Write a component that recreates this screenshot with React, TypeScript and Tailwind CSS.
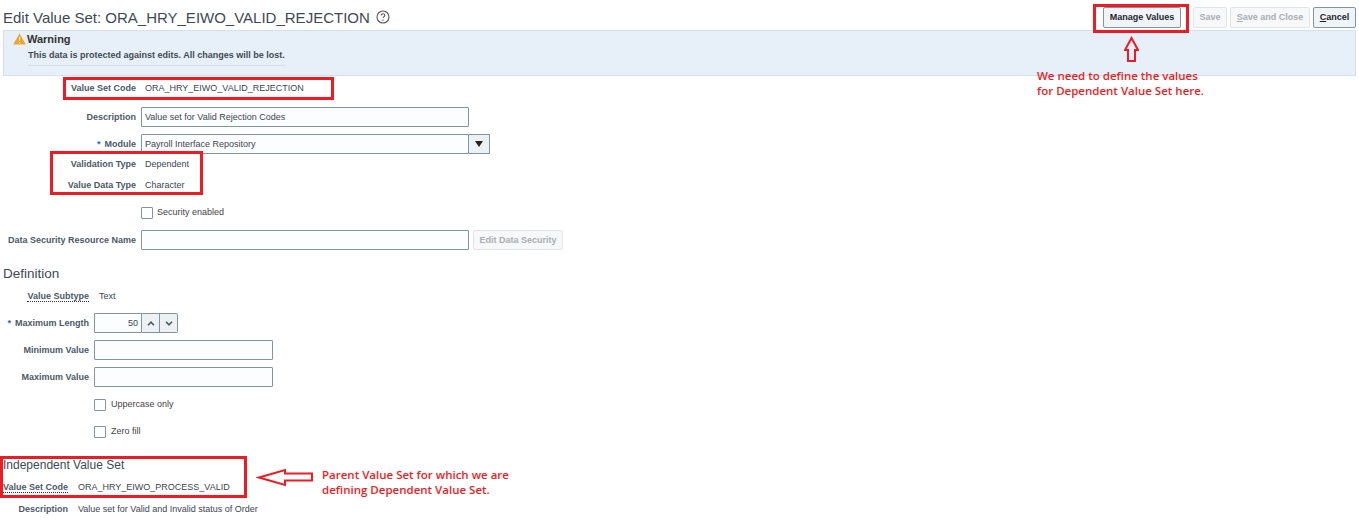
import React from 'react';

const labelCls = 'text-right text-[9px] font-bold text-[#4a5a68] whitespace-nowrap pt-[2px]';
const valueCls = 'text-[9px] text-[#3a4650] whitespace-nowrap pt-[2px]';
const inputCls = 'h-5 border border-[#7f95a5] rounded-[1px] bg-[#fcfdfe] text-[9px] text-[#3a4650] px-[3px] pt-[2px] flex items-center whitespace-nowrap';

const Row = ({ mt, width, label, children, dotted }: { mt: string; width: string; label?: React.ReactNode; children?: React.ReactNode; dotted?: boolean }) => (
    <div className={`flex items-center h-5 ${mt}`}>
        <div className={`${width} shrink-0 ${labelCls}`}>
            {dotted ? <span className="border-b border-dotted border-[#333]">{label}</span> : label}
        </div>
        {children}
    </div>
);

const Checkbox = ({ text, gap }: { text: string; gap: string }) => (
    <div className={`flex items-center ${gap}`}>
        <div className="w-3 h-3 border border-[#7f95a5] rounded-[1px] bg-white mt-[2px]" />
        <span className="text-[9px] text-[#444] mt-[1px]">{text}</span>
    </div>
);

const Btn = ({ children, cls }: { children: React.ReactNode; cls: string }) => (
    <div className={`h-[21px] pt-[2px] flex items-center justify-center rounded-[2px] text-[9px] font-bold border ${cls}`}>{children}</div>
);

const Star = () => <span className="text-[#1f6fb0] mr-[4px]">*</span>;

const on = 'border-[#7f95a5] bg-[#f1f4f6] text-[#1c2630]';
const off = 'border-[#e0e5e8] bg-[#f7f8f9] text-[#a9aeb2]';

export default function App() {
    return (
        <div className="relative w-[1359px] h-[523px] overflow-hidden bg-white font-['Liberation_Sans',Arial,sans-serif]">
            {/* header */}
            <div className="flex items-center justify-between h-[30px] pt-[4px] pl-[3px] pr-[3px]">
                <div className="flex items-center gap-[6px]">
                    <h1 className="text-[15px] text-[#3d4a55] leading-none">Edit Value Set: ORA_HRY_EIWO_VALID_REJECTION</h1>
                    <svg width="14" height="14" viewBox="0 0 14 14" fill="none" stroke="#555" strokeWidth="1.1">
                        <circle cx="7" cy="7" r="6" />
                        <path d="M5.2 5.5c0-1 .8-1.7 1.8-1.7s1.8.7 1.8 1.6c0 1.2-1.8 1.3-1.8 2.7" />
                        <path d="M7 9.6v1.2" />
                    </svg>
                </div>
                <div className="flex items-center">
                    <Btn cls={`${on} w-[78px]`}>Manage Values</Btn>
                    <Btn cls={`${off} w-[34px] ml-[12px]`}>Save</Btn>
                    <Btn cls={`${off} w-[80px] ml-[3px]`}><span><u>S</u>ave and Close</span></Btn>
                    <Btn cls={`${on} w-[43px] ml-[3px]`}><span><u>C</u>ancel</span></Btn>
                </div>
            </div>

            {/* warning */}
            <div className="mx-[3px] h-[46px] bg-[#e7f0f8] border border-[#d6e0e8] pl-[9px] pt-[1px]">
                <div className="flex items-center gap-[1px] h-[14px]">
                    <svg width="13" height="12" viewBox="0 0 13 12">
                        <path d="M6.5 .5 12.8 11.5H.2Z" fill="#f0a428" />
                        <path d="M6 4h1.2l-.2 4H6.2Z M6 9h1.1v1.2H6Z" fill="#fff" />
                    </svg>
                    <span className="text-[11px] font-bold text-[#333]">Warning</span>
                </div>
                <div className="ml-[15px] w-[258px] border-b border-[#d6e0e8] text-[9px] font-bold text-[#3f4a55] leading-[14px] pt-[2px] pb-[3px] whitespace-nowrap">
                    This data is protected against edits. All changes will be lost.
                </div>
            </div>

            {/* main form */}
            <div>
                <Row mt="mt-[2px]" width="w-[136px]" label="Value Set Code">
                    <span className={`ml-[9px] ${valueCls}`}>ORA_HRY_EIWO_VALID_REJECTION</span>
                </Row>
                <Row mt="mt-[9px]" width="w-[136px]" label="Description">
                    <div className={`${inputCls} ml-[5px] w-[328px]`}>Value set for Valid Rejection Codes</div>
                </Row>
                <Row mt="mt-[7px]" width="w-[136px]" label={<><Star />Module</>}>
                    <div className={`${inputCls} ml-[5px] w-[328px] rounded-r-none`}>Payroll Interface Repository</div>
                    <div className="h-5 w-[21px] border border-l-0 border-[#7f95a5] bg-[#eef1f3] flex items-center justify-center">
                        <svg width="8" height="6" viewBox="0 0 8 6"><path d="M0 0h8L4 6Z" fill="#222" /></svg>
                    </div>
                </Row>
                <Row mt="mt-0" width="w-[136px]" label="Validation Type">
                    <span className={`ml-[9px] ${valueCls}`}>Dependent</span>
                </Row>
                <Row mt="mt-[1px]" width="w-[136px]" label="Value Data Type">
                    <span className={`ml-[9px] ${valueCls}`}>Character</span>
                </Row>
                <Row mt="mt-[7px]" width="w-[136px]">
                    <div className="ml-[5px]"><Checkbox text="Security enabled" gap="gap-[4px]" /></div>
                </Row>
                <Row mt="mt-[8px]" width="w-[136px]" label="Data Security Resource Name">
                    <div className={`${inputCls} ml-[5px] w-[328px]`} />
                    <div className={`h-5 w-[90px] ml-[4px] pt-[2px] flex items-center justify-center rounded-[2px] text-[9px] font-bold border ${off}`}>Edit Data Security</div>
                </Row>
            </div>

            {/* definition */}
            <h2 className="mt-[14px] pl-[3px] h-5 flex items-center text-[13.5px] text-[#3d4a55]">Definition</h2>
            <Row mt="mt-[2px]" width="w-[89px]" label="Value Subtype" dotted>
                <span className={`ml-[10px] ${valueCls}`}>Text</span>
            </Row>
            <Row mt="mt-[7px]" width="w-[89px]" label={<><Star />Maximum Length</>}>
                <div className={`${inputCls} ml-[5px] w-[48px] justify-end rounded-r-none`}>50</div>
                <div className="h-5 w-[18px] border border-l-0 border-[#7f95a5] bg-[#eef1f3] flex items-center justify-center">
                    <svg width="8" height="5" viewBox="0 0 8 5" fill="none" stroke="#4a5a68" strokeWidth="1.6"><path d="M1 4.2 4 1.2l3 3" /></svg>
                </div>
                <div className="h-5 w-[18px] border border-l-0 border-[#7f95a5] bg-[#eef1f3] rounded-r-[2px] flex items-center justify-center">
                    <svg width="8" height="5" viewBox="0 0 8 5" fill="none" stroke="#4a5a68" strokeWidth="1.6"><path d="M1 .8 4 3.8l3-3" /></svg>
                </div>
            </Row>
            <Row mt="mt-[7px]" width="w-[89px]" label="Minimum Value">
                <div className={`${inputCls} ml-[5px] w-[179px]`} />
            </Row>
            <Row mt="mt-[7px]" width="w-[89px]" label="Maximum Value">
                <div className={`${inputCls} ml-[5px] w-[179px]`} />
            </Row>
            <Row mt="mt-[7px]" width="w-[89px]">
                <div className="ml-[5px]"><Checkbox text="Uppercase only" gap="gap-[5px]" /></div>
            </Row>
            <Row mt="mt-[7px]" width="w-[89px]">
                <div className="ml-[5px]"><Checkbox text="Zero fill" gap="gap-[5px]" /></div>
            </Row>

            {/* independent value set */}
            <h2 className="mt-[14px] pl-[3px] h-5 flex items-center text-[12px] text-[#3d4a55]">Independent Value Set</h2>
            <Row mt="mt-[2px]" width="w-[68px]" label="Value Set Code" dotted>
                <span className={`ml-[10px] ${valueCls}`}>ORA_HRY_EIWO_PROCESS_VALID</span>
            </Row>
            <Row mt="mt-[2px]" width="w-[68px]" label="Description">
                <span className={`ml-[10px] ${valueCls}`}>Value set for Valid and Invalid status of Order</span>
            </Row>

            {/* red annotations drawn over the screenshot */}
            <div className="absolute left-[63px] top-[77px] w-[271px] h-[23px] border-[3px] border-[#ed1c24]" />
            <div className="absolute left-[50px] top-[151px] w-[153px] h-[44px] border-[3px] border-[#ed1c24]" />
            <div className="absolute left-[1093px] top-[4px] w-[96px] h-[29px] border-[3px] border-[#ed1c24]" />
            <div className="absolute left-0 top-[456px] w-[247px] h-[42px] border-[3px] border-[#ed1c24]" />
            <svg className="absolute left-[1124px] top-[36px]" width="15" height="27" viewBox="0 0 15 27" fill="none" stroke="#ed1c24" strokeWidth="2">
                <path d="M7.5 2 1 14H4V25H11V14H14Z" />
            </svg>
            <svg className="absolute left-[256px] top-[467px]" width="58" height="21" viewBox="0 0 58 21" fill="none" stroke="#ed1c24" strokeWidth="2">
                <path d="M3 10.5 29 3V6.5H56V13.5H29V18Z" />
            </svg>
            <div className="absolute left-[1037px] top-[68px] text-[11.5px] leading-[15px] font-semibold text-[#ed1c24] font-['Open_Sans',sans-serif] whitespace-nowrap">
                We need to define the values<br />for Dependent Value Set here.
            </div>
            <div className="absolute left-[322px] top-[467px] text-[11.5px] leading-[15px] font-semibold text-[#ed1c24] font-['Open_Sans',sans-serif] whitespace-nowrap">
                Parent Value Set for which we are<br />defining Dependent Value Set.
            </div>
        </div>
    );
}
